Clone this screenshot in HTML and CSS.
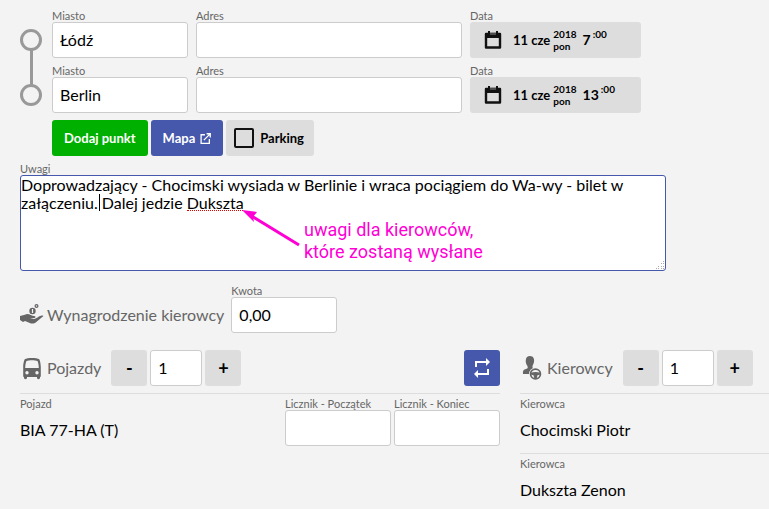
FILE: index.html
```html
<!DOCTYPE html>
<html lang="pl">
<head>
<meta charset="utf-8">
<title>Zlecenie</title>
<link rel="stylesheet" href="styles.css">
</head>
<body>
<main>
  <form class="order">
    <section class="route">
      <div class="stop">
        <span class="node node-first"></span>
        <div class="field city"><label for="city1">Miasto</label><input id="city1" type="text" value="Łódź"></div>
        <div class="field address"><label for="addr1">Adres</label><input id="addr1" type="text"></div>
        <div class="field date"><label for="date1">Data</label>
          <button id="date1" type="button" class="date-button">
            <svg class="calendar" viewBox="0 0 18 20"><path d="M2 4h14v4H2z"/><path d="M2 4h14v13.500H2z" fill="none" stroke="#111" stroke-width="2.400" stroke-linejoin="round"/><path d="M4 1h2v4H4zM12 1h2v4h-2z"/><path d="M7 2v3M9 2v3M11 2v3" stroke="#888" stroke-width="1"/></svg>
            <span class="day">11 cze</span><span class="year">2018<br>pon</span><span class="hour">7</span><span class="minutes">:00</span>
          </button>
        </div>
      </div>
      <div class="stop">
        <span class="node"></span>
        <div class="field city"><label for="city2">Miasto</label><input id="city2" type="text" value="Berlin"></div>
        <div class="field address"><label for="addr2">Adres</label><input id="addr2" type="text"></div>
        <div class="field date"><label for="date2">Data</label>
          <button id="date2" type="button" class="date-button">
            <svg class="calendar" viewBox="0 0 18 20"><path d="M2 4h14v4H2z"/><path d="M2 4h14v13.500H2z" fill="none" stroke="#111" stroke-width="2.400" stroke-linejoin="round"/><path d="M4 1h2v4H4zM12 1h2v4h-2z"/><path d="M7 2v3M9 2v3M11 2v3" stroke="#888" stroke-width="1"/></svg>
            <span class="day">11 cze</span><span class="year">2018<br>pon</span><span class="hour">13</span><span class="minutes">:00</span>
          </button>
        </div>
      </div>
      <div class="actions">
        <button type="button" class="button green">Dodaj punkt</button>
        <button type="button" class="button blue">Mapa
          <svg class="external" viewBox="0 0 10 10" fill="none" stroke="#fff" stroke-width="1.200"><path d="M4.500 1.600H1v7.800h7.500V5.500M3.500 6.500L9 1M6 .7h3.300V4"/></svg>
        </button>
        <label class="button toggle"><input type="checkbox">Parking</label>
      </div>
    </section>

    <section class="field notes">
      <label for="notes">Uwagi</label>
      <div class="notes-box">
        <textarea id="notes" spellcheck="false">Doprowadzający - Chocimski wysiada w Berlinie i wraca pociągiem do Wa-wy - bilet w załączeniu. Dalej jedzie Dukszta</textarea>
        <span class="caret"></span>
        <span class="misspelling"></span>
        <svg class="grip" viewBox="0 0 9 9" fill="#aaa"><path d="M7 0h1v1H7zM5 2h1v1H5zM7 2h1v1H7zM5 5h1v1H5zM7 5h1v1H7zM2 5h1v1H2zM0 7h1v1H0zM2 7h1v1H2zM5 7h1v1H5zM7 7h1v1H7z"/></svg>
        <svg class="arrow" viewBox="0 0 60 40" fill="#ff00d4"><path d="M9 6L58 36" stroke="#ff00d4" stroke-width="3"/><path d="M1 1l15 2-4 5 1 5z"/></svg>
        <p class="annotation">uwagi dla kierowców,<br>które zostaną wysłane</p>
      </div>
    </section>

    <section class="pay">
      <div class="heading">
        <svg class="icon" viewBox="0 0 24 24" fill="#666"><path d="M0 13l4-1 3-1c3 0 5 2 7 2 2 0 2 2 0 2l-4 .3 4 .6c2 0 5-3 7-3.200 3-.5 3 .5 1 1.500l-6 5c-2 1.400-3 1.600-5 1.200L5 18l-2 1-3-2z"/><circle cx="12.500" cy="8" r="3.200"/><circle cx="16.500" cy="3" r="2"/><path d="M12.500 6v4" stroke="#f3f3f3" stroke-width="1.200"/><circle cx="16.500" cy="3" r=".7" fill="#f3f3f3"/></svg>
        <h2>Wynagrodzenie kierowcy</h2>
      </div>
      <div class="field short"><label for="amount">Kwota</label><input id="amount" type="text" value="0,00"></div>
    </section>

    <div class="columns">
      <section>
        <header class="bar">
          <div class="heading">
            <svg class="icon" viewBox="0 0 24 24" fill="#666"><path fill-rule="evenodd" d="M5 3C7 1.500 17 1.500 19 3c1 1 1.800 5 1.800 8v9c0 .5-.3 1-.8 1v1c0 1.500-3 1.500-3 0v-1H7v1c0 1.500-3 1.500-3 0v-1c-.5 0-.8-.5-.8-1v-9c0-3 .8-7 1.800-8zM6.500 5c-.7 1-1.300 4.500-1.300 7h13.600c0-2.500-.6-6-1.300-7C15 4 9 4 6.500 5zM7 15a1.700 1.700 0 100 3.400A1.700 1.700 0 007 15zm10 0a1.700 1.700 0 100 3.400 1.700 1.700 0 000-3.400z"/></svg>
            <h2>Pojazdy</h2>
          </div>
          <div class="stepper"><button type="button">-</button><input type="text" value="1" aria-label="Pojazdy"><button type="button">+</button></div>
          <button type="button" class="swap" aria-label="Zamień"><svg viewBox="0 0 18 20" fill="#fff"><path d="M2 9V3h11V0l4 4-4 4V5H4v4zM16 11v6H5v3l-4-4 4-4v3h9v-4z"/></svg></button>
        </header>
        <div class="row">
          <div class="field item"><span class="caption">Pojazd</span><span class="value">BIA 77-HA (T)</span></div>
          <div class="field short"><label for="start">Licznik - Początek</label><input id="start" type="text"></div>
          <div class="field short"><label for="end">Licznik - Koniec</label><input id="end" type="text"></div>
        </div>
      </section>
      <section>
        <header class="bar">
          <div class="heading">
            <svg class="icon" viewBox="0 0 24 24" fill="#666"><path d="M10 0c3.500 0 4.600 3 4 6-.4 2-1.500 3.300-1.600 5 0 1 1 1.200 1.600 1.600-2 1-3 3-2.600 5.400H3c-.5-3 .6-4.600 3-5 2-.4 2-1.500 1.400-3C6 8 5.500 6 5.800 4 6 1.600 7.500 0 10 0z"/><circle cx="15.500" cy="18" r="6.500" fill="#f3f3f3"/><circle cx="15.500" cy="18" r="4.900" fill="none" stroke="#666" stroke-width="1.800"/><path d="M10.500 17c3-1.500 7-1.500 10 0v1.500l-3 .8-1 3.700h-2l-1-3.700-3-.8z"/></svg>
            <h2>Kierowcy</h2>
          </div>
          <div class="stepper"><button type="button">-</button><input type="text" value="1" aria-label="Kierowcy"><button type="button">+</button></div>
        </header>
        <div class="row"><div class="field item"><span class="caption">Kierowca</span><span class="value">Chocimski Piotr</span></div></div>
        <div class="row"><div class="field item"><span class="caption">Kierowca</span><span class="value">Dukszta Zenon</span></div></div>
      </section>
    </div>
  </form>
</main>
</body>
</html>
```
FILE: styles.css
```css
* { box-sizing: border-box; }
body { margin: 0; background: #f3f3f3; color: #000; font: 16px/18px Lato, sans-serif; }
main { padding: 10px 0 0 20px; overflow: hidden; }
h2, p { margin: 0; }
input, button, textarea { font: inherit; color: inherit; margin: 0; }
input[type="text"] { width: 100%; height: 36px; padding: 0 7px 2px; border: 1px solid #ccc; border-radius: 3px; background: #fff; }
button { border: 0; padding: 0; border-radius: 3px; cursor: pointer; }
.order { display: flex; flex-direction: column; }
.field { display: flex; flex-direction: column; min-width: 0; }
.field > label, .caption { font-size: 11px; line-height: 12px; color: #666; white-space: nowrap; }

.route { display: flex; flex-direction: column; gap: 7px; max-width: 621px; }
.stop { display: flex; gap: 8px; }
.node { position: relative; flex: none; align-self: flex-end; width: 22px; height: 22px; margin: 0 2px 7px 0; border: 3px solid #999; border-radius: 50%; }
.node-first::after { content: ""; position: absolute; left: 7px; top: 18px; width: 3px; height: 35px; background: #999; }
.city { flex: 136 1 0; }
.address { flex: 266 1 0; }
.date { flex: none; width: 171px; }
.date-button { display: flex; align-items: center; height: 36px; padding: 0 14px; background: #ddd; font-weight: 700; font-size: 14px; }
.calendar { width: 18px; height: 20px; margin-right: 11px; fill: #111; }
.day { font-size: 13px; }
.year { margin: 0 6px 0 3px; font-size: 10px; line-height: 12px; text-align: left; }
.minutes { margin: 0 0 12px 2px; font-size: 10px; line-height: 12px; }

.actions { display: flex; gap: 3px; padding-left: 32px; }
.button { display: flex; align-items: center; height: 36px; padding: 0 12px; border-radius: 3px; font-size: 13px; font-weight: 700; white-space: nowrap; }
.green { background: #00b000; color: #fff; }
.blue, .swap { background: #4558ac; color: #fff; }
.external { width: 11px; height: 11px; margin-left: 5px; }
.toggle { padding: 0 10px 0 8px; gap: 6px; background: #ddd; }
.toggle input { appearance: none; width: 20px; height: 20px; border: 2px solid #111; border-radius: 2px; }

.notes { max-width: 646px; margin-top: 7px; }
.notes-box { position: relative; display: flex; }
textarea { width: 100%; height: 96px; padding: 0; border: 1px solid #4558ac; border-radius: 3px; outline: 0; resize: none; background: #fff; line-height: 18px; }
.caret { position: absolute; left: 79px; top: 19px; width: 1px; height: 17px; background: #000; }
.misspelling { position: absolute; left: 167px; top: 35px; width: 56px; border-bottom: 1px dotted #e00000; }
.grip { position: absolute; right: 1px; bottom: 1px; width: 9px; height: 9px; }
.arrow { position: absolute; left: 221px; top: 34px; width: 60px; height: 40px; }
.annotation { position: absolute; left: 284px; top: 44px; color: #ff00d4; font: 18px/22px Roboto, sans-serif; white-space: nowrap; }

.pay { display: flex; align-items: flex-end; gap: 7px; margin-top: 14px; }
.heading { display: flex; align-items: center; gap: 3px; height: 36px; color: #666; }
.icon { width: 24px; height: 24px; flex: none; }
h2 { font-size: 16px; font-weight: 400; }
.short { flex: none; width: 106px; }

.columns { display: grid; grid-template-columns: 480fr 249fr; gap: 20px; margin-top: 17px; }
.bar { display: flex; gap: 10px; margin-bottom: 7px; }
.stepper { display: flex; gap: 3px; }
.stepper button { width: 36px; height: 36px; background: #ddd; font-size: 18px; font-weight: 700; }
.stepper input[type="text"] { width: 52px; }
.swap { display: flex; align-items: center; justify-content: center; width: 36px; height: 36px; margin-left: auto; }
.swap svg { width: 18px; height: 20px; }
.row { display: flex; gap: 3px; height: 60px; padding-top: 4px; border-top: 1px solid #ddd; }
.item { flex: 1; }
.value { line-height: 40px; }
```
